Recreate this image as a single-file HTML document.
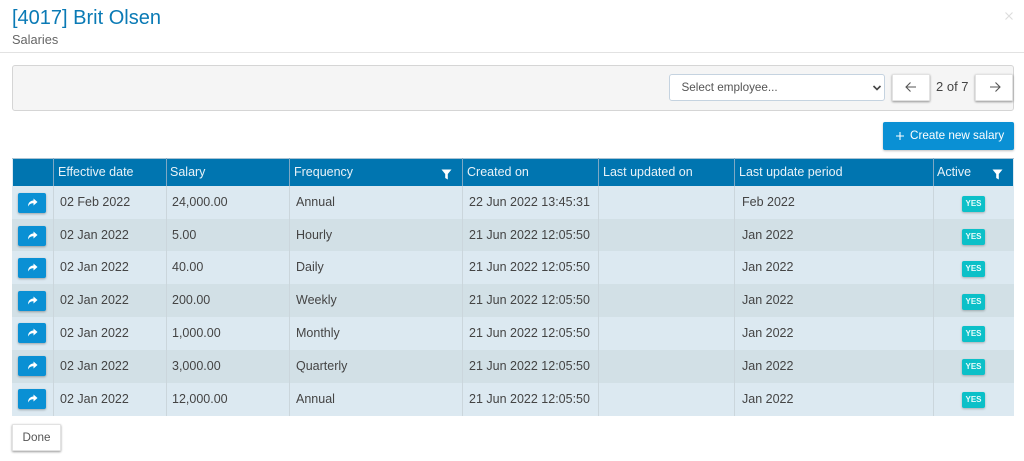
<!DOCTYPE html>
<html><head><meta charset="utf-8"><style>
html,body{margin:0;padding:0;background:#fff}
body{width:1024px;height:461px;overflow:hidden;position:relative;font-family:"Liberation Sans",sans-serif;color:#444}
div,span{position:absolute;box-sizing:border-box;white-space:nowrap}
.h{background:#0075b0;top:159px;height:27px;color:#e8f2f8;font-size:12.5px;line-height:27px;padding-left:4px}
.r{left:12px;width:1002px;height:33px}
.c{font-size:12.5px;line-height:33px;top:0;color:#444}
.b{left:6px;width:28px;height:20px;background:#0a90d4;border-radius:2px;box-shadow:0 1px 2px rgba(0,0,0,.3)}
.b svg{position:absolute;left:9px;top:5px}
.y{left:950px;width:23px;height:16px;background:#0cc0c8;border-radius:2px;color:#e8fbfb;font-size:8px;font-weight:bold;line-height:16px;text-align:center;box-shadow:0 1px 2px rgba(0,0,0,.25)}
.v{top:186px;width:1px;height:230px;background:#cbd6dc}
.hv{top:158px;width:1px;height:28px;background:#7ea8c4}
.btn{background:#fff;box-shadow:0 1px 2px rgba(0,0,0,.4);border:1px solid #e2e2e2;border-radius:1px}
</style></head><body>
<div style="left:12px;top:5px;font-size:20px;line-height:26px;color:#0a7ab5">[4017] Brit Olsen</div>
<div style="left:12px;top:31px;font-size:12.800px;line-height:18px;color:#666">Salaries</div>
<svg style="position:absolute;left:1005px;top:12px" width="8" height="8" viewBox="0 0 8 8"><path d="M0.500 0.500l7 7M7.500 0.500l-7 7" stroke="#ddd" stroke-width="1.100"/></svg>
<div style="left:0;top:52px;width:1024px;height:1px;background:#e2e2e2"></div>

<div style="left:12px;top:65px;width:1002px;height:45.500px;background:#f5f5f5;border:1px solid #d5d5d5;border-radius:3px"></div>
<div style="left:669px;top:74px;width:216px;height:26.500px;background:#fff;border:1px solid #c5d3e0;border-radius:3px;font-size:11.700px;line-height:25px;padding-left:11.500px;color:#555">Select employee...</div>
<svg style="position:absolute;left:872px;top:84px" width="10" height="8" viewBox="0 0 10 8"><path d="M1.500 2L5 5.500L8.500 2" fill="none" stroke="#444" stroke-width="1.600"/></svg>
<div class="btn" style="left:892px;top:74px;width:38px;height:27px"></div>
<svg style="position:absolute;left:904px;top:81px" width="14" height="12" viewBox="0 0 14 12"><path d="M12 6H2M6.500 1.500L2 6l4.500 4.500" fill="none" stroke="#555" stroke-width="1.100"/></svg>
<div style="left:936px;top:78px;font-size:13px;line-height:18px;color:#444">2 of 7</div>
<div class="btn" style="left:975px;top:74px;width:38px;height:27px"></div>
<svg style="position:absolute;left:988px;top:81px" width="14" height="12" viewBox="0 0 14 12"><path d="M2 6h10M7.500 1.500L12 6l-4.500 4.500" fill="none" stroke="#555" stroke-width="1.100"/></svg>

<div style="left:883px;top:122px;width:131px;height:28px;background:#0a90d4;border-radius:2px;box-shadow:0 1px 2px rgba(0,0,0,.25);color:#fff;font-size:11.700px;line-height:28px;padding-left:27px">Create new salary</div>
<svg style="position:absolute;left:895px;top:131px" width="10" height="10" viewBox="0 0 10 10"><path d="M5 1v8M1 5h8" stroke="#fff" stroke-width="1.100"/></svg>

<div style="left:12px;top:158px;width:1002px;height:258px;background:#dce9f1"></div>
<div style="left:12px;top:158px;width:1002px;height:1px;background:#a9c2d3"></div>
<div class="h" style="left:13px;width:1000px"></div>
<div class="h" style="left:54px">Effective date</div>
<div class="h" style="left:166px">Salary</div>
<div class="h" style="left:290px">Frequency</div>
<div class="h" style="left:463px">Created on</div>
<div class="h" style="left:599px">Last updated on</div>
<div class="h" style="left:735px">Last update period</div>
<div class="h" style="left:933px">Active</div>
<svg style="position:absolute;left:441px;top:169px" width="11" height="11" viewBox="0 0 11 11"><path d="M0.500 0.500h10L6.800 5v5.500L4.200 9V5z" fill="#fff"/></svg>
<svg style="position:absolute;left:992px;top:169px" width="11" height="11" viewBox="0 0 11 11"><path d="M0.500 0.500h10L6.800 5v5.500L4.200 9V5z" fill="#fff"/></svg>

<div class="r" style="top:186px;background:#dce9f1"><div class="b" style="top:7px"><svg width="11" height="10" viewBox="0 0 11 10"><path d="M6.500 0.500L10.500 4 6.500 7.500V5.300C4 5.300 2.500 6 1 8.500 1 5 3 2.700 6.500 2.500z" fill="#fff"/></svg></div><span class="c" style="left:48px">02 Feb 2022</span><span class="c" style="left:160px">24,000.00</span><span class="c" style="left:284px">Annual</span><span class="c" style="left:457px">22 Jun 2022 13:45:31</span><span class="c" style="left:730px">Feb 2022</span><div class="y" style="top:10px">YES</div></div>
<div class="r" style="top:219px;background:#d2e0e6"><div class="b" style="top:6.500px"><svg width="11" height="10" viewBox="0 0 11 10"><path d="M6.500 0.500L10.500 4 6.500 7.500V5.300C4 5.300 2.500 6 1 8.500 1 5 3 2.700 6.500 2.500z" fill="#fff"/></svg></div><span class="c" style="left:48px">02 Jan 2022</span><span class="c" style="left:160px">5.00</span><span class="c" style="left:284px">Hourly</span><span class="c" style="left:457px">21 Jun 2022 12:05:50</span><span class="c" style="left:730px">Jan 2022</span><div class="y" style="top:9.500px">YES</div></div>
<div class="r" style="top:251px;background:#dce9f1"><div class="b" style="top:7px"><svg width="11" height="10" viewBox="0 0 11 10"><path d="M6.500 0.500L10.500 4 6.500 7.500V5.300C4 5.300 2.500 6 1 8.500 1 5 3 2.700 6.500 2.500z" fill="#fff"/></svg></div><span class="c" style="left:48px">02 Jan 2022</span><span class="c" style="left:160px">40.00</span><span class="c" style="left:284px">Daily</span><span class="c" style="left:457px">21 Jun 2022 12:05:50</span><span class="c" style="left:730px">Jan 2022</span><div class="y" style="top:10px">YES</div></div>
<div class="r" style="top:284px;background:#d2e0e6"><div class="b" style="top:6.500px"><svg width="11" height="10" viewBox="0 0 11 10"><path d="M6.500 0.500L10.500 4 6.500 7.500V5.300C4 5.300 2.500 6 1 8.500 1 5 3 2.700 6.500 2.500z" fill="#fff"/></svg></div><span class="c" style="left:48px">02 Jan 2022</span><span class="c" style="left:160px">200.00</span><span class="c" style="left:284px">Weekly</span><span class="c" style="left:457px">21 Jun 2022 12:05:50</span><span class="c" style="left:730px">Jan 2022</span><div class="y" style="top:10px">YES</div></div>
<div class="r" style="top:317px;background:#dce9f1"><div class="b" style="top:6px"><svg width="11" height="10" viewBox="0 0 11 10"><path d="M6.500 0.500L10.500 4 6.500 7.500V5.300C4 5.300 2.500 6 1 8.500 1 5 3 2.700 6.500 2.500z" fill="#fff"/></svg></div><span class="c" style="left:48px">02 Jan 2022</span><span class="c" style="left:160px">1,000.00</span><span class="c" style="left:284px">Monthly</span><span class="c" style="left:457px">21 Jun 2022 12:05:50</span><span class="c" style="left:730px">Jan 2022</span><div class="y" style="top:9px">YES</div></div>
<div class="r" style="top:350px;background:#d2e0e6"><div class="b" style="top:5.500px"><svg width="11" height="10" viewBox="0 0 11 10"><path d="M6.500 0.500L10.500 4 6.500 7.500V5.300C4 5.300 2.500 6 1 8.500 1 5 3 2.700 6.500 2.500z" fill="#fff"/></svg></div><span class="c" style="left:48px">02 Jan 2022</span><span class="c" style="left:160px">3,000.00</span><span class="c" style="left:284px">Quarterly</span><span class="c" style="left:457px">21 Jun 2022 12:05:50</span><span class="c" style="left:730px">Jan 2022</span><div class="y" style="top:9px">YES</div></div>
<div class="r" style="top:383px;background:#dce9f1"><div class="b" style="top:5.500px"><svg width="11" height="10" viewBox="0 0 11 10"><path d="M6.500 0.500L10.500 4 6.500 7.500V5.300C4 5.300 2.500 6 1 8.500 1 5 3 2.700 6.500 2.500z" fill="#fff"/></svg></div><span class="c" style="left:48px">02 Jan 2022</span><span class="c" style="left:160px">12,000.00</span><span class="c" style="left:284px">Annual</span><span class="c" style="left:457px">21 Jun 2022 12:05:50</span><span class="c" style="left:730px">Jan 2022</span><div class="y" style="top:9px">YES</div></div>

<div class="v" style="left:53px"></div><div class="hv" style="left:53px"></div>
<div class="v" style="left:166px"></div><div class="hv" style="left:166px"></div>
<div class="v" style="left:289px"></div><div class="hv" style="left:289px"></div>
<div class="v" style="left:462px"></div><div class="hv" style="left:462px"></div>
<div class="v" style="left:598px"></div><div class="hv" style="left:598px"></div>
<div class="v" style="left:734px"></div><div class="hv" style="left:734px"></div>
<div class="v" style="left:933px"></div><div class="hv" style="left:933px"></div>

<div class="btn" style="left:12px;top:424px;width:49px;height:27px;font-size:11.700px;line-height:25px;text-align:center;color:#555">Done</div>
</body></html>
